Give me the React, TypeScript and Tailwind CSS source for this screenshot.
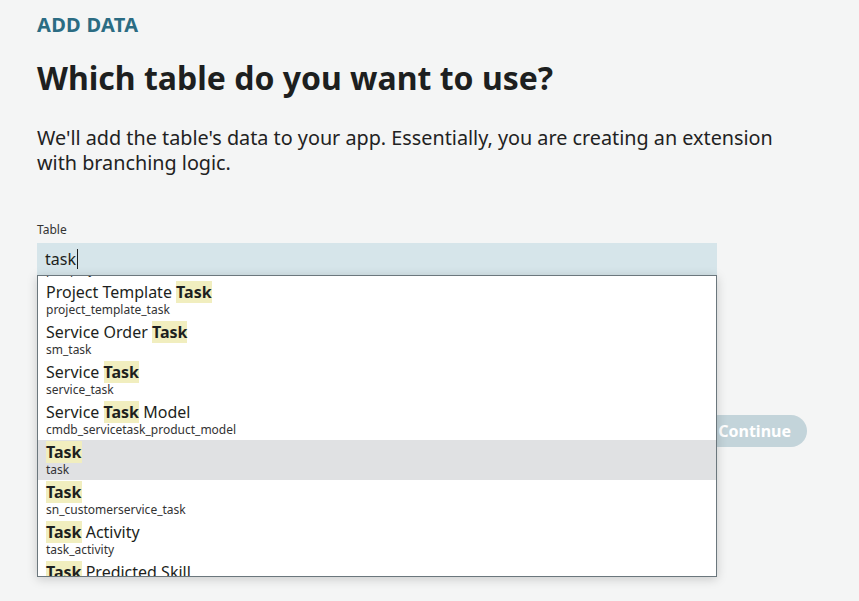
import React from "react";

interface TableOption {
  label: string;
  name: string;
}

const options: TableOption[] = [
  { label: "Project Task", name: "pm_project_task" },
  { label: "Project Template Task", name: "project_template_task" },
  { label: "Service Order Task", name: "sm_task" },
  { label: "Service Task", name: "service_task" },
  { label: "Service Task Model", name: "cmdb_servicetask_product_model" },
  { label: "Task", name: "task" },
  { label: "Task", name: "sn_customerservice_task" },
  { label: "Task Activity", name: "task_activity" },
  { label: "Task Predicted Skill", name: "task_predicted_skill" },
];

const query = "task";

function Highlight({ text }: { text: string }) {
  const idx = text.toLowerCase().indexOf(query);
  if (idx < 0) return <>{text}</>;
  return (
    <>
      {text.slice(0, idx)}
      <mark className="bg-[#f1eebf] font-bold text-[#1d1f20]">
        {text.slice(idx, idx + query.length)}
      </mark>
      {text.slice(idx + query.length)}
    </>
  );
}

export default function App() {
  return (
    <div className="min-h-[601px] bg-[#f4f5f5] px-[37px] pt-[12px] font-['Noto_Sans',sans-serif] text-[#1d1f20]">
      <div className="w-[770px]">
        <p className="text-[20px] font-bold leading-[26px] tracking-[0.3px] text-[#2b6c83]">ADD DATA</p>
        <h1 className="mt-[20px] text-[32px] font-bold leading-[40px]">Which table do you want to use?</h1>
        <p className="mt-[27px] w-[750px] text-[19.8px] leading-[25px] text-[#222]">
          We'll add the table's data to your app. Essentially, you are creating an extension with branching logic.
        </p>

        {/* Table picker */}
        <div className="relative mt-[47px] w-[680px]">
          <label className="block text-[12px] leading-[16px] text-[#333]">Table</label>
          <div className="mt-[5px] flex h-[32px] items-center bg-[#d6e5ea] px-[8px] text-[16px]">
            <span>task</span>
            <span className="ml-[1px] h-[20px] w-px bg-[#1d1f20]" />
          </div>

          <div className="absolute left-0 top-[53px] z-10 h-[302px] w-[680px] overflow-hidden border border-[#6b777d] bg-white shadow-[0_2px_10px_rgba(0,0,0,0.18)]">
            <ul className="-mt-[36px]">
              {options.map((o, i) => (
                <li
                  key={i}
                  className={`flex h-[40px] flex-col justify-center px-[8px] ${o.name === "task" ? "bg-[#e0e1e3]" : ""}`}
                >
                  <span className="text-[16px] leading-[20px] text-[#1d1f20]">
                    <Highlight text={o.label} />
                  </span>
                  <span className="text-[12px] leading-[16px] text-[#333]">{o.name}</span>
                </li>
              ))}
            </ul>
          </div>
        </div>

        <div className="mt-[140px] flex justify-end">
          <button className="h-[32px] rounded-full bg-[#c3d4da] px-[16px] text-[16px] font-bold text-white">
            Continue
          </button>
        </div>
      </div>
    </div>
  );
}
